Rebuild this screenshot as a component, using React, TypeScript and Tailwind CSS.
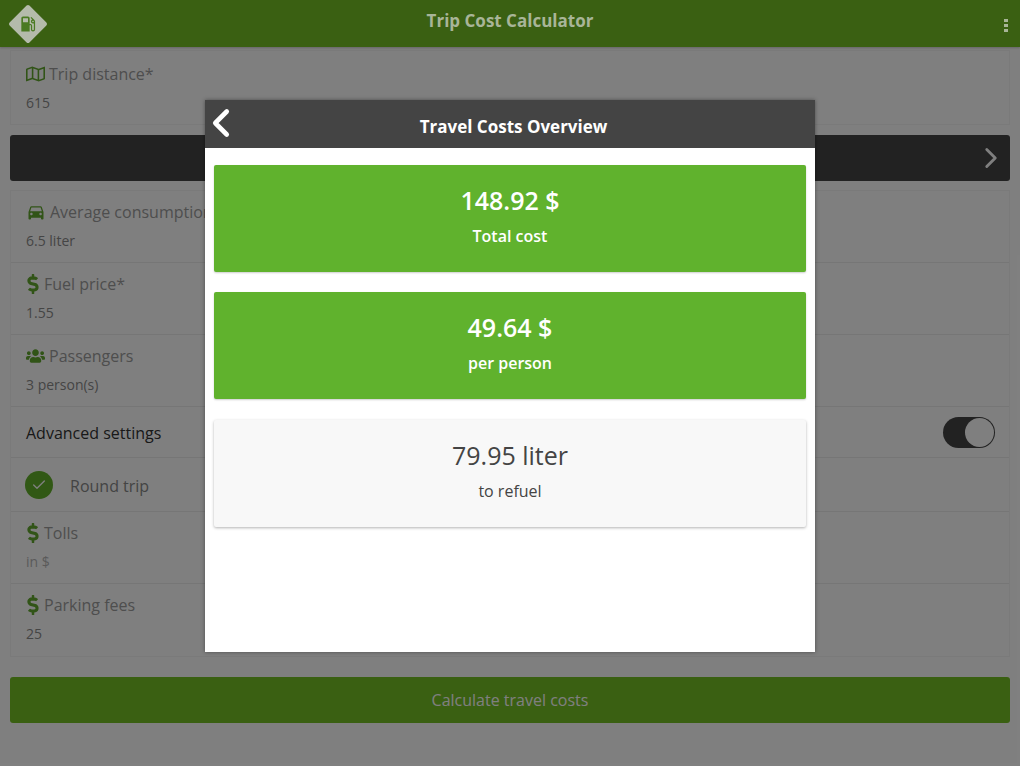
import { ChevronLeft, ChevronRight, Check } from "lucide-react";
import { FaDollarSign, FaRegMap, FaUsers } from "react-icons/fa";
import { MdDirectionsCar, MdLocalGasStation } from "react-icons/md";
import type { ReactNode } from "react";

type RowProps = {
  icon: ReactNode;
  iconWidth: string;
  label: string;
  value: string;
  muted?: boolean;
  last?: boolean;
};

function Row({ icon, iconWidth, label, value, muted, last }: RowProps) {
  return (
    <div className={`h-[72px] px-[15px] pt-[9px] ${last ? "" : "border-b border-[#ececec]"}`}>
      <div className="flex items-center gap-[4px] h-6 text-[16px] text-[#9c9c9c]">
        <span className={`text-[#62a82f] text-[20px] flex items-center justify-center ${iconWidth}`}>
          {icon}
        </span>
        <span className="whitespace-nowrap">{label}</span>
      </div>
      <p className={`mt-[7px] text-[14px] leading-5 ${muted ? "text-[#b5b5b5]" : "text-[#8a8a8a]"}`}>
        {value}
      </p>
    </div>
  );
}

type CostCardProps = {
  value: string;
  label: string;
  light?: boolean;
};

function CostCard({ value, label, light }: CostCardProps) {
  return (
    <div
      className={`h-[107px] rounded-[2px] pt-[18px] flex flex-col items-center ${
        light
          ? "mt-px bg-[#f8f8f8] text-[#444] shadow-[0_1px_3px_rgba(0,0,0,0.3)]"
          : "bg-[#60b22d] text-white font-semibold shadow-[0_1px_2px_rgba(0,0,0,0.2)]"
      }`}
    >
      <p className="text-[25px] leading-[34px]">{value}</p>
      <p className="text-[16px] leading-5 mt-[9px]">{label}</p>
    </div>
  );
}

export default function App() {
  return (
    <div className="relative w-[1020px] h-[766px] overflow-hidden bg-white font-['Open_Sans',sans-serif]">
      <main className="px-[10px] pt-[50px]">
        <div className="h-[75px] pt-[2px] border border-[#f4f4f4]">
          <Row icon={<FaRegMap />} iconWidth="w-[19px]" label="Trip distance*" value="615" last />
        </div>
        <div className="mt-[10px] h-[46px] rounded-[3px] bg-[#444] flex items-center justify-end pr-[2px] text-white">
          <ChevronRight size={34} />
        </div>

        <section className="mt-[9px] border border-[#f4f4f4]">
          <Row icon={<MdDirectionsCar />} iconWidth="w-[20px]" label="Average consumption" value="6.5 liter" />
          <Row icon={<FaDollarSign />} iconWidth="w-[14px]" label="Fuel price*" value="1.55" />
          <Row icon={<FaUsers />} iconWidth="w-[19px]" label="Passengers" value="3 person(s)" />
          <div className="h-[51px] pl-[15px] pr-[14px] flex items-center justify-between border-b border-[#ececec]">
            <span className="text-[16px] text-[#333] mt-[2px]">Advanced settings</span>
            <div className="w-[52px] h-[31px] rounded-full bg-[#444] flex justify-end p-[1px]">
              <span className="w-[29px] h-[29px] rounded-full bg-white" />
            </div>
          </div>
          <div className="h-[54px] px-[14px] flex items-center gap-[17px] border-b border-[#ececec]">
            <span className="w-[28px] h-[28px] rounded-full bg-[#62b02a] flex items-center justify-center text-white">
              <Check size={16} />
            </span>
            <span className="text-[16px] text-[#888] mt-[2px]">Round trip</span>
          </div>
          <Row icon={<FaDollarSign />} iconWidth="w-[14px]" label="Tolls" value="in $" muted />
          <Row icon={<FaDollarSign />} iconWidth="w-[14px]" label="Parking fees" value="25" last />
        </section>

        <button className="mt-[20px] w-full h-[46px] rounded-[3px] bg-[#74c024] text-white text-[16px]">
          Calculate travel costs
        </button>
      </main>

      <div className="absolute inset-0 bg-black/50" />

      <header className="absolute top-0 inset-x-0 h-[47px] bg-[#3a6012] flex items-center justify-between px-2 shadow-[0_1px_2px_rgba(0,0,0,0.2)]">
        <div className="w-10 flex items-center justify-center">
          <div className="w-[28px] h-[28px] rotate-45 bg-[#b4bbab] flex items-center justify-center rounded-[2px]">
            <MdLocalGasStation className="-rotate-45 text-[#4a7a22] text-[20px]" />
          </div>
        </div>
        <h1 className="text-[17px] font-bold text-[#a8b598] -mt-[5px]">Trip Cost Calculator</h1>
        <div className="w-10 flex flex-col items-end gap-[2px] pr-[4px] pt-[3px]">
          <span className="w-[4px] h-[3px] bg-[#a8b598]" />
          <span className="w-[4px] h-[3px] bg-[#a8b598]" />
          <span className="w-[4px] h-[3px] bg-[#a8b598]" />
        </div>
      </header>

      <div className="absolute left-[205px] top-[100px] w-[610px] h-[552px] bg-white shadow-[0_0_4px_rgba(0,0,0,0.4)]">
        <div className="relative h-[48px] bg-[#444] flex items-center justify-center text-white">
          <ChevronLeft size={46} strokeWidth={2.4} className="absolute left-[-7px] top-0" />
          <h2 className="text-[17px] font-bold ml-[7px] mt-[6px]">Travel Costs Overview</h2>
        </div>
        <div className="px-[9px] pt-[17px] flex flex-col gap-5">
          <CostCard value="148.92 $" label="Total cost" />
          <CostCard value="49.64 $" label="per person" />
          <CostCard value="79.95 liter" label="to refuel" light />
        </div>
      </div>
    </div>
  );
}
